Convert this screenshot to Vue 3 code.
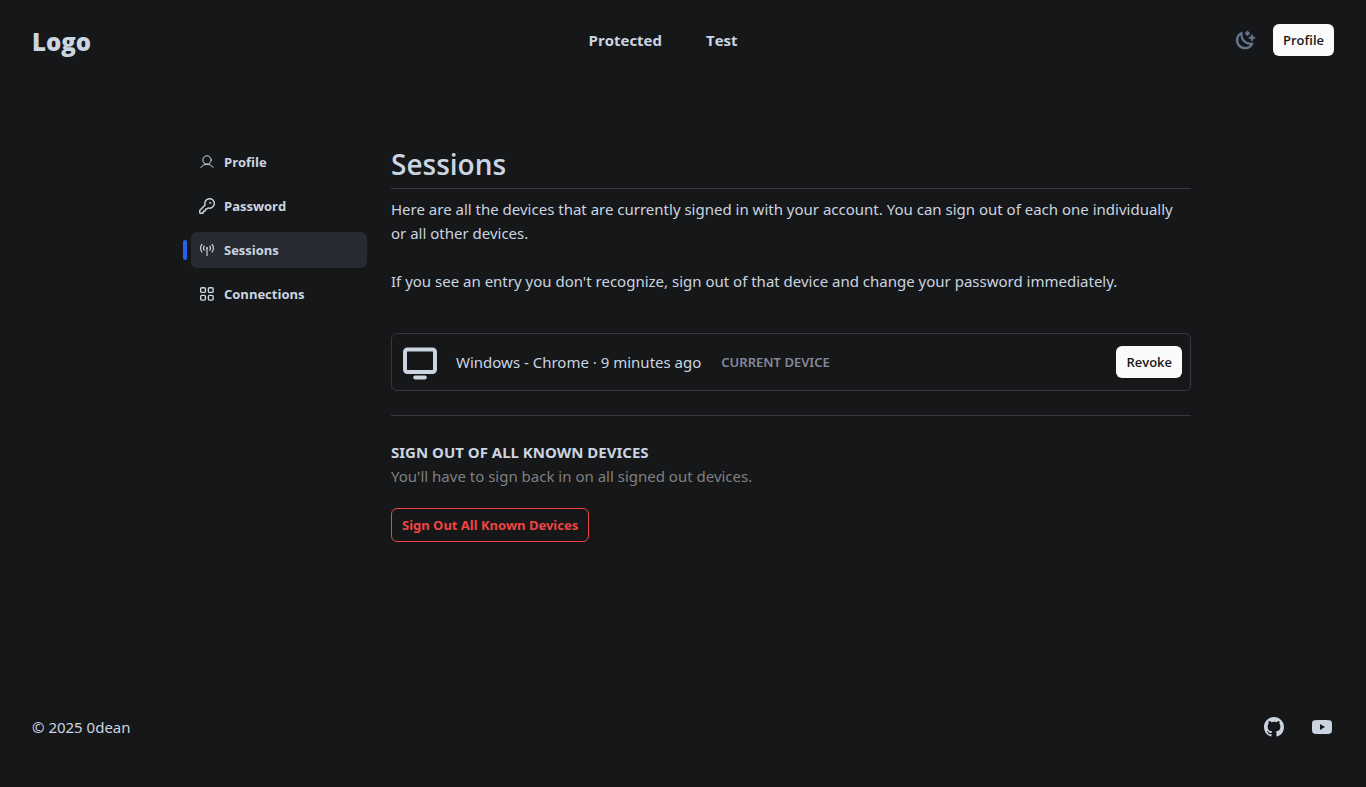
<script setup>
const navLinks = ['Protected', 'Test']
const menu = [
  { id: 'profile', label: 'Profile' },
  { id: 'password', label: 'Password' },
  { id: 'sessions', label: 'Sessions' },
  { id: 'connections', label: 'Connections' },
]
const active = 'sessions'
</script>

<template>
  <div class="page">
    <header class="header">
      <a class="logo" href="#">Logo</a>
      <nav class="nav" aria-label="Main">
        <a v-for="link in navLinks" :key="link" href="#">{{ link }}</a>
      </nav>
      <div class="actions">
        <button class="theme" type="button" aria-label="Toggle theme">
          <svg width="24" height="24" viewBox="6 -8 256 256" fill="currentColor">
            <path d="M244,96a12,12,0,0,1-12,12H220v12a12,12,0,0,1-24,0V108H184a12,12,0,0,1,0-24h12V72a12,12,0,0,1,24,0V84h12A12,12,0,0,1,244,96ZM144,60h4v4a12,12,0,0,0,24,0V60h4a12,12,0,0,0,0-24h-4V32a12,12,0,0,0-24,0v4h-4a12,12,0,0,0,0,24Zm75.81,90.38A12,12,0,0,1,222,162.3,97,97,0,1,1,93.7,34a12,12,0,0,1,15.89,13.6A85.12,85.12,0,0,0,208.43,146.4,12,12,0,0,1,219.81,150.38Zm-29.28,21.8A109,109,0,0,1,83.82,65.47a73,73,0,1,0,106.71,106.71Z" />
          </svg>
        </button>
        <button class="btn" type="button">Profile</button>
      </div>
    </header>

    <main class="main">
      <nav class="side" aria-label="Account">
        <a v-for="item in menu" :key="item.id" href="#" class="side-link" :class="{ active: item.id === active }">
          <svg v-if="item.id === 'profile'" width="16" height="16" viewBox="0 0 16 16" fill="none" stroke="currentColor" stroke-linecap="round">
            <circle cx="8" cy="6" r="4.2" />
            <path d="M1.9 13.5a7.05 7.05 0 0 1 12.2 0" />
          </svg>
          <svg v-else-if="item.id === 'password'" width="16" height="16" viewBox="1 1 22 22" fill="none" stroke="currentColor" stroke-width="2" stroke-linecap="round" stroke-linejoin="round">
            <path d="M2.586 17.414A2 2 0 0 0 2 18.828V21a1 1 0 0 0 1 1h3a1 1 0 0 0 1-1v-1a1 1 0 0 1 1-1h1a1 1 0 0 0 1-1v-1a1 1 0 0 1 1-1h.172a2 2 0 0 0 1.414-.586l.814-.814a6.5 6.5 0 1 0-4-4z" />
            <circle cx="16.5" cy="7.5" r=".5" fill="currentColor" />
          </svg>
          <svg v-else-if="item.id === 'sessions'" width="16" height="16" viewBox="0 0 16 16" fill="none" stroke="currentColor" stroke-width="1.2" stroke-linecap="round">
            <path d="M2.9 2.4a6.6 6.6 0 0 0 0 7.6M13.1 2.4a6.6 6.6 0 0 1 0 7.6M5.2 4.2a3.6 3.6 0 0 0 0 4M10.8 4.2a3.6 3.6 0 0 1 0 4M8 6.5v7" />
            <circle cx="8" cy="6" r="1" fill="currentColor" stroke="none" />
          </svg>
          <svg v-else width="16" height="16" viewBox="0 0 16 16" fill="none" stroke="currentColor" stroke-width="1.4">
            <rect x="1.7" y="1.7" width="4.7" height="4.7" rx="1" />
            <rect x="9.4" y="1.7" width="4.7" height="4.7" rx="1" />
            <rect x="1.7" y="9.4" width="4.7" height="4.7" rx="1" />
            <rect x="9.4" y="9.4" width="4.7" height="4.7" rx="1" />
          </svg>
          <span>{{ item.label }}</span>
        </a>
      </nav>

      <section class="content">
        <h1>Sessions</h1>
        <p>Here are all the devices that are currently signed in with your account. You can sign out of each one individually or all other devices.</p>
        <p class="gap">If you see an entry you don't recognize, sign out of that device and change your password immediately.</p>

        <div class="device">
          <svg width="40" height="40" viewBox="0 0 40 40" fill="none" stroke="currentColor" stroke-width="4" stroke-linecap="round">
            <rect x="5" y="7.5" width="30" height="22.5" rx="2.4" />
            <path d="M15.2 35.4h9.6" />
          </svg>
          <span class="device-name">Windows - Chrome · 9 minutes ago</span>
          <span class="current">CURRENT DEVICE</span>
          <button class="btn revoke" type="button">Revoke</button>
        </div>

        <div class="signout">
          <h2>SIGN OUT OF ALL KNOWN DEVICES</h2>
          <p class="muted">You'll have to sign back in on all signed out devices.</p>
          <button class="danger" type="button">Sign Out All Known Devices</button>
        </div>
      </section>
    </main>

    <footer class="footer">
      <span>© 2025 0dean</span>
      <div class="social">
        <a href="#" aria-label="GitHub">
          <svg width="24" height="24" viewBox="0 0 24 24" fill="currentColor">
            <path d="M12 2C6.475 2 2 6.475 2 12a9.994 9.994 0 0 0 6.838 9.488c.5.087.687-.213.687-.476 0-.237-.013-1.024-.013-1.862-2.512.463-3.162-.612-3.362-1.175-.113-.288-.6-1.175-1.025-1.413-.35-.187-.85-.65-.013-.662.788-.013 1.35.725 1.538 1.025.9 1.512 2.338 1.087 2.912.825.088-.65.35-1.087.638-1.337-2.225-.25-4.55-1.113-4.55-4.938 0-1.088.387-1.987 1.025-2.688-.1-.25-.45-1.275.1-2.65 0 0 .837-.262 2.75 1.026a9.28 9.28 0 0 1 2.5-.338c.85 0 1.7.112 2.5.337 1.912-1.3 2.75-1.024 2.75-1.024.55 1.375.2 2.4.1 2.65.637.7 1.025 1.587 1.025 2.687 0 3.838-2.337 4.688-4.562 4.938.362.312.675.912.675 1.85 0 1.337-.013 2.412-.013 2.75 0 .262.188.574.688.474A10.016 10.016 0 0 0 22 12c0-5.525-4.475-10-10-10z" />
          </svg>
        </a>
        <a href="#" aria-label="YouTube">
          <svg width="24" height="24" viewBox="0 0 24 24" fill="currentColor">
            <path fill-rule="evenodd" d="M12 5c3 0 6 .1 7.6.3C21.2 5.5 21.8 6.6 21.9 8.2C22 9.5 22 10.5 22 12s0 2.5-.1 3.8c-.1 1.6-.7 2.7-2.3 2.9C18 18.9 15 19 12 19s-6-.1-7.6-.3c-1.6-.2-2.2-1.3-2.3-2.9C2 14.5 2 13.5 2 12s0-2.5.1-3.8c.1-1.6.7-2.7 2.3-2.9C6 5.1 9 5 12 5zM10 9v6l5-3z" />
          </svg>
        </a>
      </div>
    </footer>
  </div>
</template>

<style>
body {
  margin: 0;
  background: #161719;
}
</style>

<style scoped>
.page {
  display: flex;
  flex-direction: column;
  min-height: 100vh;
  box-sizing: border-box;
  background: #161719;
  color: #cbd5e1;
  font-family: "Noto Sans", "Open Sans", sans-serif;
  font-size: 15px;
  line-height: 24px;
}
a {
  color: inherit;
  text-decoration: none;
}
svg {
  display: block;
  flex: none;
}
button {
  font: inherit;
  cursor: pointer;
}
.header {
  display: grid;
  grid-template-columns: 1fr auto 1fr;
  align-items: center;
  height: 80px;
  padding: 0 32px;
  font-family: "Open Sans", "Noto Sans", sans-serif;
}
.logo {
  padding-top: 4px;
  font-size: 24px;
  font-weight: 800;
  line-height: 32px;
}
.nav {
  display: flex;
  gap: 44px;
  margin-right: 40px;
  font-weight: 700;
}
.actions {
  display: flex;
  align-items: center;
  justify-content: flex-end;
  gap: 16px;
}
.theme {
  padding: 0;
  border: 0;
  background: none;
  color: #64748b;
}
.btn {
  height: 32px;
  padding: 0 10px;
  border: 0;
  border-radius: 6px;
  background: #fafafa;
  color: #18181b;
  font-family: "Open Sans", "Noto Sans", sans-serif;
  font-size: 13px;
  font-weight: 600;
}
.main {
  display: flex;
  flex: 1;
  align-items: flex-start;
  gap: 24px;
  width: 100%;
  max-width: 1016px;
  margin: 0 auto;
  padding: 64px 0 0 16px;
  box-sizing: border-box;
}
.side {
  display: flex;
  flex: none;
  flex-direction: column;
  gap: 8px;
  width: 176px;
  font-family: "Open Sans", "Noto Sans", sans-serif;
}
.side-link {
  position: relative;
  display: flex;
  align-items: center;
  gap: 9px;
  height: 36px;
  padding: 0 8px;
  border-radius: 6px;
  font-size: 13px;
  font-weight: 700;
}
.side-link.active {
  background: #272a31;
}
.side-link.active::before {
  content: "";
  position: absolute;
  top: 8px;
  left: -8px;
  width: 4px;
  height: 20px;
  border-radius: 2px;
  background: #2563eb;
}
.content {
  flex: 1;
  min-width: 0;
}
h1,
h2,
p {
  margin: 0;
}
h1 {
  margin-bottom: 8px;
  padding-bottom: 4px;
  border-bottom: 1px solid #37383b;
  font-family: "Open Sans", "Noto Sans", sans-serif;
  font-size: 28px;
  font-weight: 600;
  line-height: 40px;
}
.gap {
  margin-top: 24px;
}
.device {
  display: flex;
  align-items: center;
  margin-top: 40px;
  padding: 8px;
  border: 1px solid #37383b;
  border-radius: 6px;
}
.device-name {
  margin-left: 16px;
}
.current {
  margin-left: 20px;
  color: #84899a;
  font-size: 13px;
  font-weight: 600;
}
.revoke {
  margin-left: auto;
}
.signout {
  margin-top: 24px;
  padding-top: 24px;
  border-top: 1px solid #37383b;
}
h2 {
  font-size: 15px;
  font-weight: 700;
  line-height: 24px;
}
.muted {
  color: #808080;
}
.danger {
  height: 34px;
  margin-top: 20px;
  padding: 0 10px;
  border: 1px solid #ef4444;
  border-radius: 6px;
  background: transparent;
  color: #ef4444;
  font-size: 13px;
  font-weight: 700;
}
.footer {
  display: flex;
  align-items: center;
  justify-content: space-between;
  height: 120px;
  padding: 0 32px;
}
.social {
  display: flex;
  gap: 24px;
}
</style>
